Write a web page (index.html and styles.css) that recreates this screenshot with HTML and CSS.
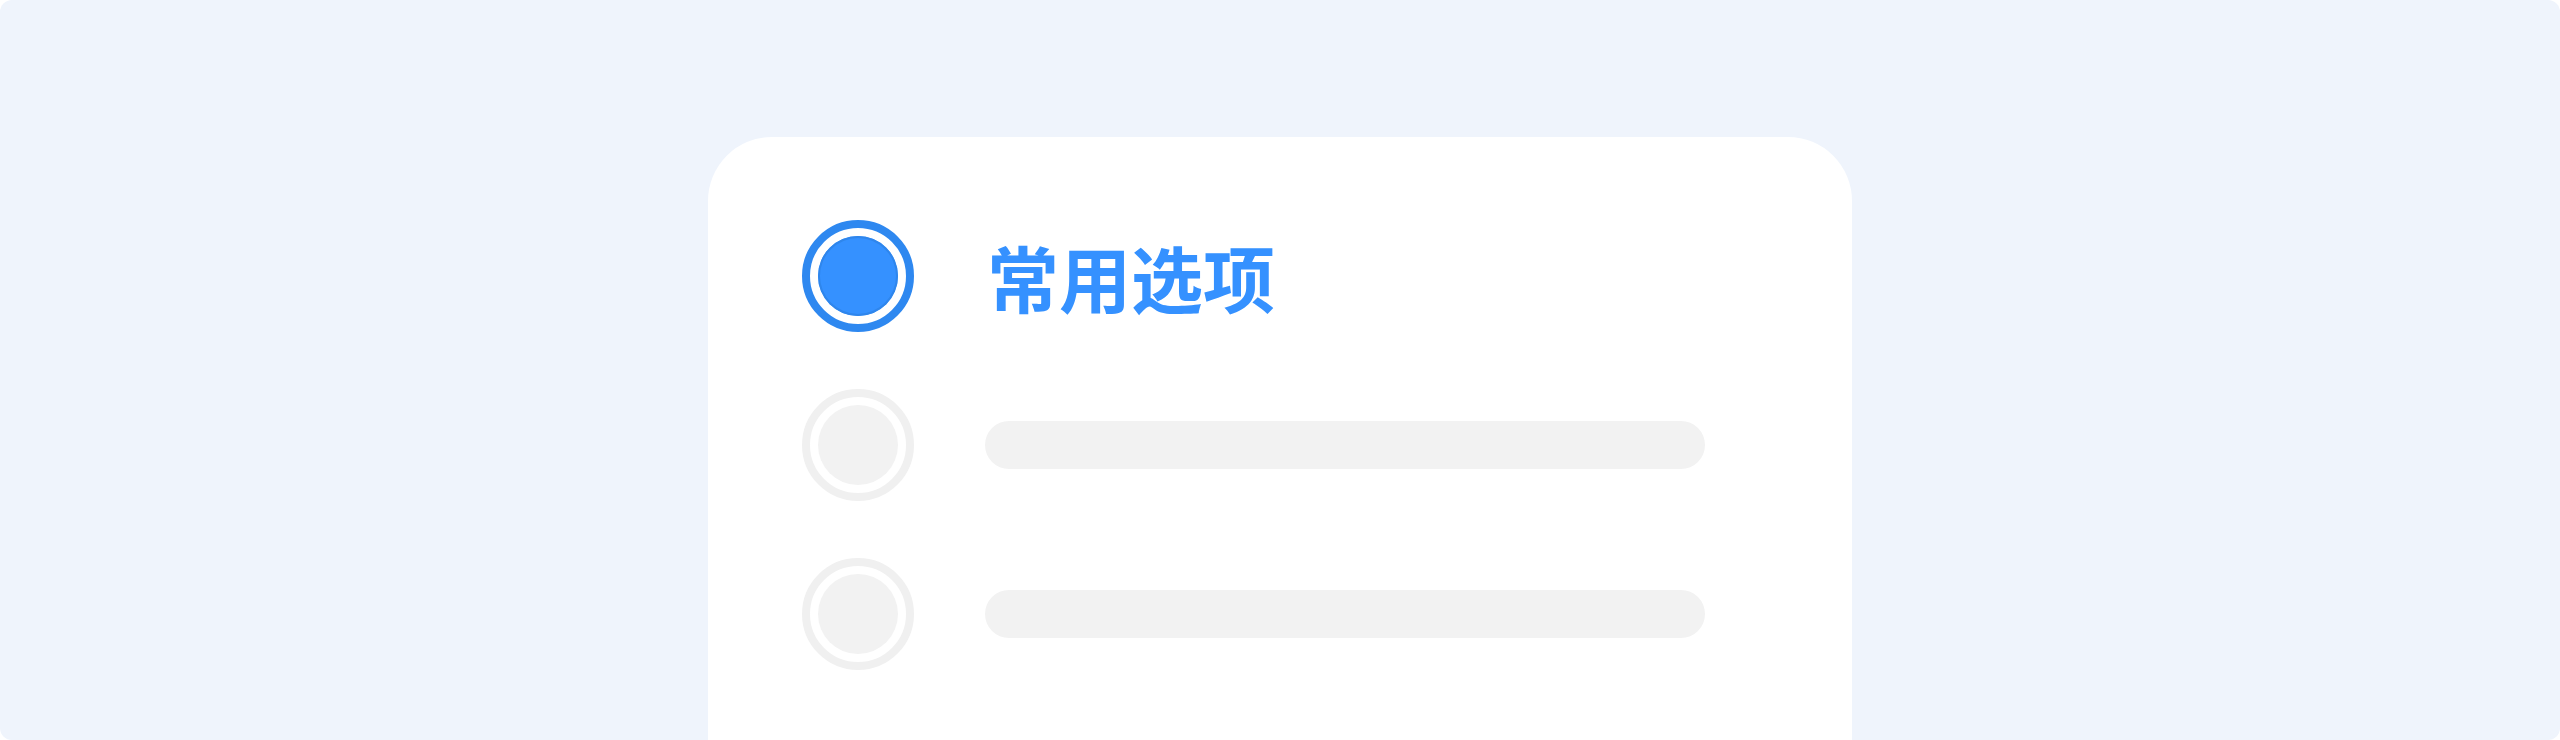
FILE: index.html
```html
<!DOCTYPE html>
<html lang="zh-CN">
<head>
<meta charset="utf-8">
<title>常用选项</title>
<link rel="stylesheet" href="styles.css">
</head>
<body>
<div class="frame">
  <div class="card">
    <div class="option">
      <span class="radio radio--on"><span class="dot"></span></span>
      <span class="label">常用选项</span>
    </div>
    <div class="option">
      <span class="radio"><span class="dot"></span></span>
      <span class="bar"></span>
    </div>
    <div class="option">
      <span class="radio"><span class="dot"></span></span>
      <span class="bar"></span>
    </div>
  </div>
</div>
</body>
</html>
```
FILE: styles.css
```css
html, body {
  margin: 0;
  padding: 0;
  background: #ffffff;
}

.frame {
  width: 2560px;
  height: 740px;
  box-sizing: border-box;
  background: #eff4fc;
  border-radius: 12px;
  overflow: hidden;
  display: flex;
  justify-content: center;
  padding-top: 137px;
}

.card {
  width: 1144px;
  height: 640px;
  box-sizing: border-box;
  background: #ffffff;
  border-radius: 64px 64px 0 0;
  padding: 83px 0 0 94px;
  display: flex;
  flex-direction: column;
  gap: 57px;
}

.option {
  display: flex;
  align-items: center;
  gap: 71px;
  height: 112px;
}

.radio {
  flex: none;
  width: 112px;
  height: 112px;
  box-sizing: border-box;
  border-radius: 50%;
  border: 8px solid #f0f0f0;
  padding: 8px;
  background: #ffffff;
}

.dot {
  display: block;
  width: 100%;
  height: 100%;
  border-radius: 50%;
  background: #f2f2f2;
}

.radio--on {
  border-color: #2e88f0;
}

.radio--on .dot {
  background: #3591ff;
  box-shadow: inset 0 0 0 2px #2f86ec;
}

.label {
  font-family: "Noto Sans CJK SC", "Noto Sans", sans-serif;
  font-weight: 700;
  font-size: 72px;
  line-height: 1;
  color: #3591ff;
  margin-left: 2px;
}

.bar {
  display: block;
  width: 720px;
  height: 48px;
  border-radius: 24px;
  background: #f2f2f2;
}
```
